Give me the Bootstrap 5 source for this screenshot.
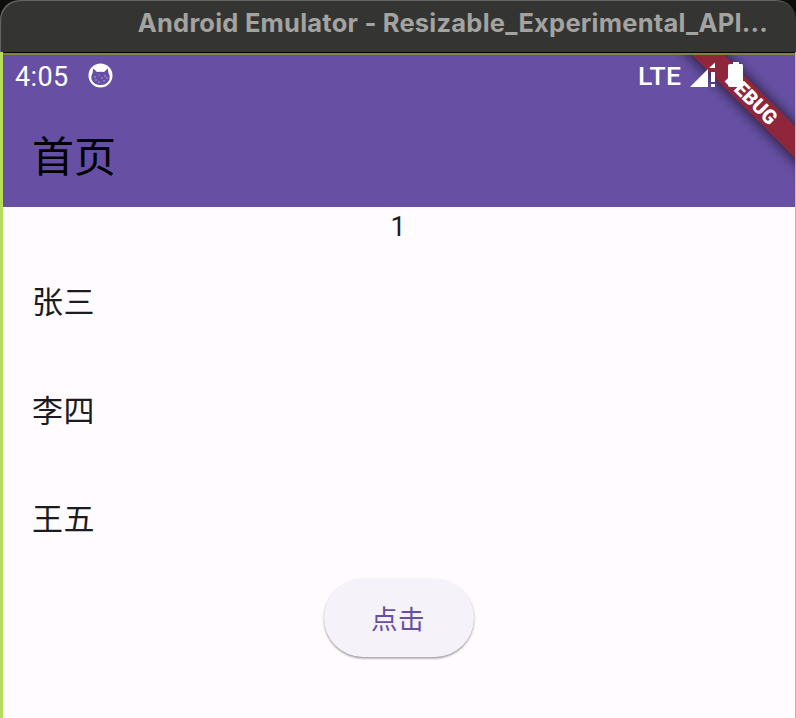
<!DOCTYPE html>
<html lang="zh-CN">
<head>
<meta charset="utf-8">
<meta name="viewport" content="width=device-width, initial-scale=1">
<title>首页</title>
<link href="https://cdn.jsdelivr.net/npm/bootstrap@5.3.0/dist/css/bootstrap.min.css" rel="stylesheet">
<style>
body{background:#0d0d0c;font-family:Roboto,"Noto Sans CJK SC",sans-serif;color:#1c1b1f}
.window-title{height:52px;background:#343432;border-radius:20px 20px 0 0;box-shadow:inset 1px 1px 1px #686866;padding:0 28px 6px 0;font:700 25.5px/1 Inter,sans-serif;letter-spacing:.22px;color:#a3a3a1;white-space:nowrap}
.screen{height:666px;background:#fffbff;border-left:3px solid #b7dc58;border-right:1px solid #b9bdac}
.app-header{height:155px;background:#6750a4;border-top:1px solid #000}
.app-header::before{content:"";display:block;height:2px;background:#7c863f}
.status-row{height:44px;padding-left:12px;color:#fff;font-size:27px;line-height:44px}
.clock{width:73px;letter-spacing:.4px}
.network{margin-left:524px;width:52px;letter-spacing:.4px;font-weight:500;font-size:26.5px;line-height:41px}
.app-title{font-size:42px;line-height:60px;color:#000;padding:29px 0 0 29px}
.ribbon{right:0;top:2px;width:144px;height:152px}
.counter{height:42px;font-size:27px;line-height:40px;padding-right:2px}
.person{height:108.5px;padding-left:29px;font-size:31px;letter-spacing:.4px}
.press.btn{width:150px;height:78px;border:0;border-radius:39px;background:#f6f2f9;color:#6750a4;font-size:26.5px;letter-spacing:.5px;padding:8px 14px 4px 12px;margin-top:4.5px;box-shadow:0 1.5px 2px #0005,0 1px 4px #0001}
</style>
<script src="https://cdn.jsdelivr.net/npm/bootstrap@5.3.0/dist/js/bootstrap.bundle.min.js"></script>
</head>
<body class="overflow-hidden">
<div class="window-title d-flex align-items-center justify-content-end"><span>Android Emulator - Resizable_Experimental_API...</span></div>
<main class="screen">
<header class="app-header position-relative overflow-hidden">
<svg class="ribbon position-absolute" viewBox="651 55 144 152" aria-label="DEBUG">
<defs><filter id="soft" x="-50%" y="-50%" width="200%" height="200%"><feGaussianBlur stdDeviation="6.5"/></filter></defs>
<path d="M670 33L820 183V152L701 33Z" fill="#000" stroke="#000" stroke-width="5" opacity=".6" filter="url(#soft)"/>
<path d="M670 33L820 183V151L702 33Z" fill="#8f263b"/>
<text transform="translate(751.5 98.5) rotate(45)" text-anchor="middle" y="7" font-family="Roboto" font-weight="900" font-size="20" fill="#fff">DEBUG</text>
</svg>
<div class="status-row d-flex position-relative">
<span class="clock">4:05</span>
<svg class="mt-2" width="26" height="28" viewBox="0 0 26 28"><circle cx="12.5" cy="12.5" r="12" fill="#fff"/><path d="M5.3 5.5L9 9Q12.5 8.3 16 9L19.7 5.5L20.5 10Q22.5 13 21.5 16.5Q19 22 12.5 22T3.5 16.5Q2.5 13 4.5 10Z" fill="#6750a4"/><g fill="#c9bde8"><circle cx="7" cy="14" r=".7"/><circle cx="11" cy="12" r=".6"/><circle cx="17" cy="13" r=".7"/><circle cx="14" cy="15" r=".7"/><circle cx="8" cy="17" r=".7"/><circle cx="11" cy="19" r=".7"/><circle cx="16" cy="18" r=".7"/><circle cx="19" cy="15" r=".7"/></g></svg>
<span class="network">LTE</span>
<svg width="56" height="36" viewBox="690 55 56 36" fill="#fff"><path d="M690 87L708 69V87ZM709 68L715 62.5V68ZM711 72H715V82H711ZM711 84H715V87H711Z"/><path d="M733 62H739V64H742Q743 64 743 66V85Q743 87 741 87H730Q728 87 728 85V66Q728 64 730 64H733Z"/></svg>
</div>
<div class="app-title">首页</div>
</header>
<div class="counter text-center">1</div>
<div class="person d-flex align-items-center">张三</div>
<div class="person d-flex align-items-center">李四</div>
<div class="person d-flex align-items-center">王五</div>
<div class="d-flex justify-content-center"><button class="press btn" type="button">点击</button></div>
</main>
</body>
</html>
